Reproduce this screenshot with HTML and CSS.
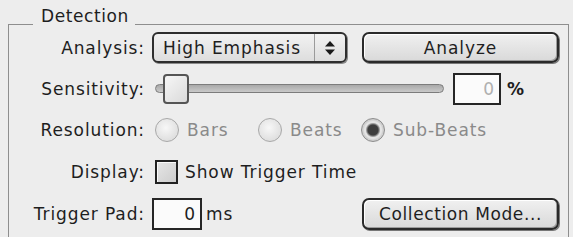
FILE: index.html
```html
<!DOCTYPE html>
<html lang="en">
<head>
  <meta charset="UTF-8" />
  <title>Detection</title>
  <link rel="stylesheet" href="styles.css">
</head>
<body>

  <div class="group">
    <div class="group-head">
      <span class="group-title">Detection</span>
    </div>

    <div class="group-body">
      <!-- Analysis -->
      <span class="lbl">Analysis:</span>
      <div class="ctl">
        <div class="popup">
          <span class="popup-text">High Emphasis</span>
          <span class="popup-arrows">
            <svg width="10" height="14" viewBox="0 0 10 14">
              <path d="M5 0 L10 5.5 L0 5.5 Z" fill="#1a1a1a"/>
              <path d="M0 8.5 L10 8.5 L5 14 Z" fill="#1a1a1a"/>
            </svg>
          </span>
        </div>
        <button class="btn btn-analyze">Analyze</button>
      </div>

      <!-- Sensitivity -->
      <span class="lbl">Sensitivity:</span>
      <div class="ctl">
        <div class="slider">
          <div class="track"></div>
          <div class="thumb"></div>
        </div>
        <div class="field field-pct disabled">0</div>
        <span class="unit">%</span>
      </div>

      <!-- Resolution -->
      <span class="lbl">Resolution:</span>
      <div class="ctl">
        <span class="radio"><span class="radio-dot"></span>Bars</span>
        <span class="radio"><span class="radio-dot"></span>Beats</span>
        <span class="radio on"><span class="radio-dot"></span>Sub-Beats</span>
      </div>

      <!-- Display -->
      <span class="lbl">Display:</span>
      <div class="ctl">
        <span class="check"><span class="check-box"></span>Show Trigger Time</span>
      </div>

      <!-- Trigger Pad -->
      <span class="lbl">Trigger Pad:</span>
      <div class="ctl">
        <div class="field field-pad">0</div>
        <span class="unit unit-ms">ms</span>
        <button class="btn btn-collect">Collection Mode...</button>
      </div>
    </div>
  </div>

</body>
</html>
```

FILE: styles.css
```css
body {
  margin: 0;
  width: 573px;
  height: 237px;
  overflow: hidden;
  background: #ededed;
  font-family: 'DejaVu Sans', 'Liberation Sans', sans-serif;
  font-size: 17px;
  letter-spacing: 0.9px;
  color: #1e1e1e;
}

.group {
  margin-left: 8px;
  width: 561px;
}

/* title sits on the top line of the box */
.group-head {
  display: flex;
  align-items: flex-end;
  height: 25px;
}

.group-head::before,
.group-head::after {
  content: '';
  border-bottom: 1px solid #8e8e8e;
}

.group-head::before {
  width: 25px;
}

.group-head::after {
  flex: 1;
}

.group-title {
  line-height: 17px;
  padding: 0 6px 0 8px;
  letter-spacing: 0.6px;
}

.group-body {
  border-left: 1px solid #8e8e8e;
  border-right: 1px solid #8e8e8e;
  padding-top: 2px;
  height: 210px;
  display: grid;
  grid-template-columns: 136px 1fr;
  grid-template-rows: 41px 41px 42px 42px 42px;
  column-gap: 7px;
  align-items: center;
}

.lbl {
  text-align: right;
  white-space: nowrap;
}

.ctl {
  display: flex;
  align-items: center;
  height: 100%;
  padding-right: 9px;
}

/* popup menu */
.popup {
  display: flex;
  box-sizing: border-box;
  width: 195px;
  height: 31px;
  border: 2px solid #2e2e2e;
  border-radius: 6px;
  background: linear-gradient(#f2f2f2, #dddddd);
  box-shadow: 1px 1px 0 #8a8a8a;
}

.popup-text {
  flex: 1;
  display: flex;
  align-items: center;
  padding-left: 9px;
  white-space: nowrap;
}

.popup-arrows {
  width: 30px;
  border-left: 1px solid #9a9a9a;
  display: flex;
  align-items: center;
  justify-content: center;
}

/* push buttons */
.btn {
  font: inherit;
  letter-spacing: inherit;
  color: #1e1e1e;
  box-sizing: border-box;
  width: 197px;
  height: 31px;
  margin-left: auto;
  padding: 0;
  border: 2px solid #2a2a2a;
  border-radius: 7px;
  background: linear-gradient(#f0f0f0, #d9d9d9);
  box-shadow: inset -1px -1px 0 #9c9c9c, inset 1px 1px 0 #ffffff, 1px 1px 0 #777;
  white-space: nowrap;
}

.btn-collect {
  height: 32px;
  letter-spacing: 0.6px;
}

/* slider */
.slider {
  position: relative;
  display: flex;
  align-items: center;
  width: 289px;
  height: 30px;
  margin-left: 3px;
}

.track {
  box-sizing: border-box;
  width: 100%;
  height: 9px;
  border: 1px solid #7c7c7c;
  border-radius: 5px;
  background: linear-gradient(#a9a9a9, #c9c9c9);
}

.thumb {
  position: absolute;
  left: 8px;
  top: 0;
  box-sizing: border-box;
  width: 26px;
  height: 30px;
  border: 2px solid #555;
  border-radius: 4px;
  background: linear-gradient(135deg, #f6f6f6, #dadada);
}

/* text fields */
.field {
  box-sizing: border-box;
  height: 32px;
  border: 2px solid #262626;
  background: #fbfbfb;
  text-align: right;
  line-height: 28px;
  padding-right: 4px;
}

.field-pct {
  width: 48px;
  margin-left: 9px;
}

.field.disabled {
  color: #b0b0b0;
}

.field-pad {
  width: 50px;
}

.unit {
  margin-left: 6px;
  font-weight: bold;
}

.unit-ms {
  margin-left: 4px;
  font-weight: normal;
}

/* radio buttons */
.radio {
  display: inline-flex;
  align-items: center;
  gap: 8px;
  width: 103px;
  flex-shrink: 0;
  color: #8a8a8a;
  white-space: nowrap;
}

.radio:first-child {
  margin-left: 3px;
}

.radio:last-child {
  width: auto;
}

.radio-dot {
  flex-shrink: 0;
  box-sizing: border-box;
  width: 24px;
  height: 24px;
  border: 1px solid #a8a8a8;
  border-radius: 50%;
  background: radial-gradient(circle at 45% 40%, #f7f7f7, #d6d6d6);
}

.radio.on .radio-dot {
  border-color: #8c8c8c;
  background: radial-gradient(circle, #3e3e3e 0 5px, #7a7a7a 6px, #e4e4e4 7.5px 8.5px, #cfcfcf 10px);
}

/* checkbox */
.check {
  display: inline-flex;
  align-items: center;
  gap: 7px;
  margin-left: 3px;
}

.check-box {
  flex-shrink: 0;
  box-sizing: border-box;
  width: 23px;
  height: 24px;
  border: 2px solid #222;
  background: linear-gradient(135deg, #e6e6e6, #cdcdcd);
  box-shadow: inset 1px 1px 0 #fafafa;
}
```
